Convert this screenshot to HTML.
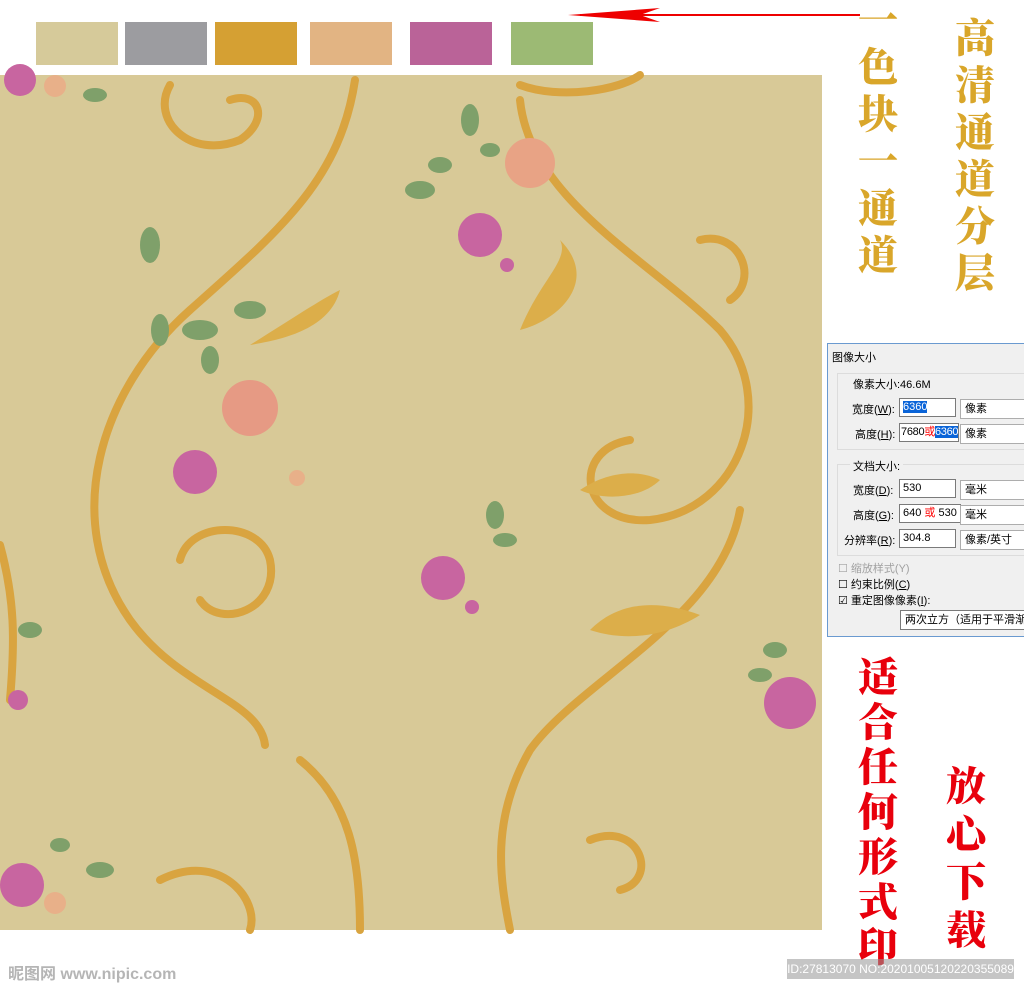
<!DOCTYPE html>
<html><head><meta charset="utf-8"><style>
body{margin:0;width:1024px;height:989px;background:#fff;position:relative;overflow:hidden;font-family:"Liberation Sans","Noto Sans CJK SC",sans-serif}
.sw{position:absolute;top:22px;height:43px;width:82px}
.vt{position:absolute;font-family:"Noto Serif CJK SC","Noto Sans CJK SC",serif;font-weight:900;font-size:40px;line-height:47px;width:44px;text-align:center}
.dlg{position:absolute;left:827px;top:343px;width:200px;height:292px;background:#f0f0f0;border:1px solid #6a9ad0;font-size:11px;color:#000}
.dlg div{position:absolute;white-space:nowrap}
.in{background:#fff;border:1px solid #7a7a7a;height:17px;line-height:17px;padding-left:3px;overflow:hidden}
.sel{background:#fff;border:1px solid #adadad;height:18px;line-height:18px;padding-left:4px;overflow:hidden}
.grp{border:1px solid #dcdcdc}
</style></head><body>
<div class="sw" style="left:36px;background:#d6ca9a"></div>
<div class="sw" style="left:125px;background:#9c9ca0"></div>
<div class="sw" style="left:215px;background:#d5a033"></div>
<div class="sw" style="left:310px;background:#e2b483"></div>
<div class="sw" style="left:410px;background:#ba6398"></div>
<div class="sw" style="left:511px;background:#9cba74"></div>
<svg style="position:absolute;left:0;top:0" width="1024" height="989">
<line x1="580" y1="15" x2="860" y2="15" stroke="#e00" stroke-width="2"/>
<path d="M568 15 L660 8 L640 15 L660 22Z" fill="#e00"/>
<rect x="0" y="75" width="822" height="855" fill="#d8c997"/>
<g fill="none" stroke="#d9a440" stroke-width="8" stroke-linecap="round">
<path d="M355 80 C340 180 280 230 190 310 C100 390 60 520 130 620 C180 690 260 700 265 745"/>
<path d="M170 85 C150 120 190 160 240 140 C270 120 260 90 230 100"/>
<path d="M520 100 C530 200 650 260 720 330 C780 400 740 510 650 520 C580 525 570 450 630 440"/>
<path d="M740 510 C720 620 580 680 530 750 C490 820 500 880 510 930"/>
<path d="M300 760 C350 800 360 860 360 930"/>
<path d="M180 560 C190 520 260 520 270 560 C280 610 220 630 200 600"/>
<path d="M700 240 C740 230 760 280 730 300"/>
<path d="M590 840 C640 820 660 880 620 890"/>
<path d="M520 85 C560 100 620 90 640 75"/>
<path d="M0 545 C15 600 15 640 10 700"/>
<path d="M160 880 C220 850 260 900 250 930"/>
</g>
<g fill="#dcae4a">
<path d="M520 330 C540 280 570 260 560 240 C600 280 560 320 520 330Z"/>
<path d="M250 345 C290 320 320 300 340 290 C330 330 280 340 250 345Z"/>
<path d="M590 630 C620 600 660 600 700 615 C660 640 620 640 590 630Z"/>
<path d="M580 490 C610 470 640 470 660 480 C640 500 600 500 580 490Z"/>
</g>
<g fill="#7fa06a">
<ellipse cx="150" cy="245" rx="10" ry="18"/><ellipse cx="200" cy="330" rx="18" ry="10"/><ellipse cx="250" cy="310" rx="16" ry="9"/><ellipse cx="160" cy="330" rx="9" ry="16"/><ellipse cx="210" cy="360" rx="9" ry="14"/>
<ellipse cx="470" cy="120" rx="9" ry="16"/><ellipse cx="420" cy="190" rx="15" ry="9"/><ellipse cx="440" cy="165" rx="12" ry="8"/><ellipse cx="490" cy="150" rx="10" ry="7"/>
<ellipse cx="495" cy="515" rx="9" ry="14"/><ellipse cx="505" cy="540" rx="12" ry="7"/>
<ellipse cx="30" cy="630" rx="12" ry="8"/><ellipse cx="775" cy="650" rx="12" ry="8"/><ellipse cx="760" cy="675" rx="12" ry="7"/>
<ellipse cx="95" cy="95" rx="12" ry="7"/><ellipse cx="100" cy="870" rx="14" ry="8"/><ellipse cx="60" cy="845" rx="10" ry="7"/>
</g>
<g>
<circle cx="250" cy="408" r="28" fill="#e69a84"/>
<circle cx="195" cy="472" r="22" fill="#c865a0"/>
<circle cx="530" cy="163" r="25" fill="#e8a385"/>
<circle cx="480" cy="235" r="22" fill="#c865a0"/>
<circle cx="443" cy="578" r="22" fill="#c865a0"/>
<circle cx="790" cy="703" r="26" fill="#c865a0"/>
<circle cx="22" cy="885" r="22" fill="#c865a0"/>
<circle cx="55" cy="903" r="11" fill="#e8b089"/>
<circle cx="20" cy="80" r="16" fill="#c865a0"/>
<circle cx="55" cy="86" r="11" fill="#e8b089"/>
<circle cx="18" cy="700" r="10" fill="#c865a0"/>
<circle cx="297" cy="478" r="8" fill="#e8b089"/>
<circle cx="507" cy="265" r="7" fill="#c865a0"/>
<circle cx="472" cy="607" r="7" fill="#c865a0"/>
</g>
</svg>
<div class="vt" style="left:856px;top:-6px;color:#d9a62a">一<br>色<br>块<br>一<br>通<br>道</div>
<div class="vt" style="left:953px;top:12px;color:#d9a62a">高<br>清<br>通<br>道<br>分<br>层</div>
<div class="vt" style="left:856px;top:652px;color:#e8000c;line-height:45px">适<br>合<br>任<br>何<br>形<br>式<br>印</div>
<div class="vt" style="left:944px;top:760px;color:#e8000c;line-height:48px">放<br>心<br>下<br>载</div>
<div class="dlg">
<div style="left:4px;top:5px">图像大小</div>
<div class="grp" style="left:9px;top:29px;width:200px;height:75px"></div>
<div style="left:22px;top:32px;background:#f0f0f0;padding:0 3px">像素大小:46.6M</div>
<div style="left:24px;top:57px">宽度(<u>W</u>):</div>
<div class="in" style="left:71px;top:54px;width:52px"><span style="background:#0a64d8;color:#fff">6360</span></div>
<div class="sel" style="left:132px;top:55px;width:70px">像素</div>
<div style="left:27px;top:82px">高度(<u>H</u>):</div>
<div class="in" style="left:71px;top:79px;width:57px;padding-left:1px;letter-spacing:-0.3px">7680<span style="color:red">或</span><span style="background:#0a64d8;color:#fff">6360</span></div>
<div class="sel" style="left:132px;top:80px;width:70px">像素</div>
<div class="grp" style="left:9px;top:120px;width:200px;height:90px"></div>
<div style="left:22px;top:114px;background:#f0f0f0;padding:0 3px">文档大小:</div>
<div style="left:25px;top:138px">宽度(<u>D</u>):</div>
<div class="in" style="left:71px;top:135px;width:52px">530</div>
<div class="sel" style="left:132px;top:136px;width:70px">毫米</div>
<div style="left:25px;top:163px">高度(<u>G</u>):</div>
<div class="in" style="left:71px;top:160px;width:57px">640 <span style="color:red">或</span> 530</div>
<div class="sel" style="left:132px;top:161px;width:70px">毫米</div>
<div style="left:16px;top:188px">分辨率(<u>R</u>):</div>
<div class="in" style="left:71px;top:185px;width:52px">304.8</div>
<div class="sel" style="left:132px;top:186px;width:70px">像素/英寸</div>
<div style="left:10px;top:216px;color:#a0a0a0">☐ 缩放样式(Y)</div>
<div style="left:10px;top:232px">☐ 约束比例(<u>C</u>)</div>
<div style="left:10px;top:248px">☑ 重定图像像素(<u>I</u>):</div>
<div class="sel" style="left:72px;top:266px;width:130px;border-color:#7a7a7a">两次立方（适用于平滑渐变</div>
</div>
<div style="position:absolute;left:8px;top:960px;color:#b5b5b5;font-size:16px;font-weight:bold">昵图网 www.nipic.com</div>
<div style="position:absolute;left:787px;top:959px;width:227px;height:20px;background:rgba(150,150,150,0.55);color:#fff;font-size:12px;line-height:20px;text-align:center;white-space:nowrap">ID:27813070 NO:20201005120220355089</div>
</body></html>
